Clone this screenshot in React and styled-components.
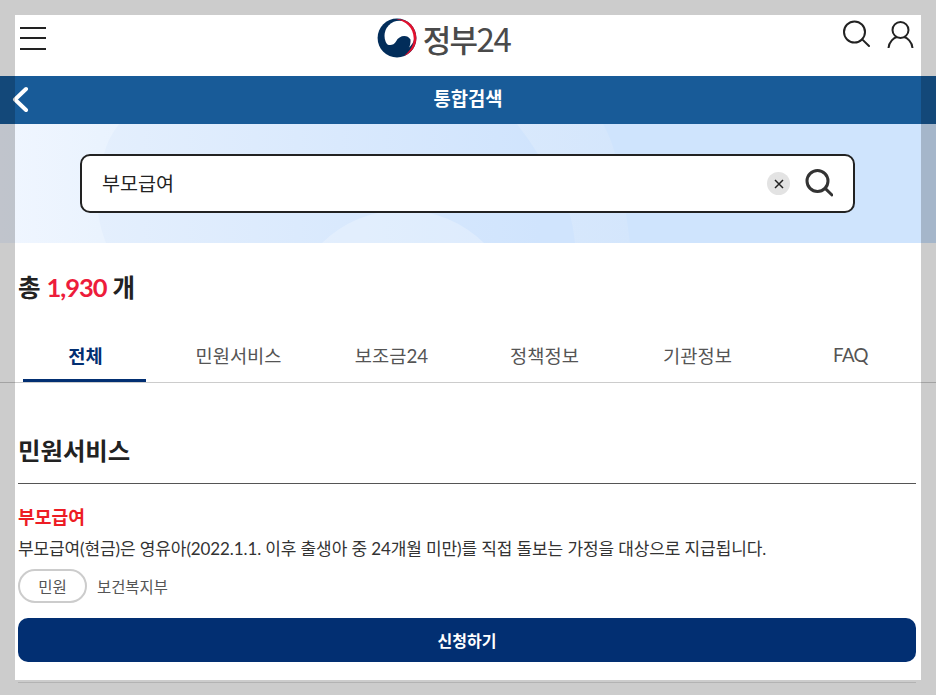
import React from "react";
import styled, { createGlobalStyle } from "styled-components";

const Global = createGlobalStyle`
  html, body { margin: 0; padding: 0; background: #fff; overflow: hidden; }
  * { box-sizing: border-box; }
  body { font-family: Lato, "Noto Sans CJK KR", "Noto Sans", sans-serif; color: #222; }
`;

const Page = styled.div`
  width: 936px;
  height: 695px;
`;
const Frame = styled.div`
  position: fixed;
  inset: 0;
  border: 15px solid rgba(0, 0, 0, 0.2);
  pointer-events: none;
`;
const Header = styled.header`
  height: 76px;
  display: flex;
  align-items: flex-start;
  justify-content: space-between;
  padding: 0 22px 0 20px;
`;
const Burger = styled.div`
  width: 26px;
  margin-top: 26.5px;
  display: flex;
  flex-direction: column;
  gap: 8.5px;
`;
const BurgerLine = styled.span`
  display: block;
  height: 2px;
  background: #222;
`;
const Logo = styled.div`
  display: flex;
  align-items: center;
  gap: 6px;
  margin-top: 18px;
  margin-left: -1px;
  height: 40px;
`;
const LogoText = styled.span`
  font-family: "Noto Sans CJK KR", sans-serif;
  font-size: 31px;
  font-weight: 500;
  letter-spacing: -1.6px;
  color: #4a4a4a;
  line-height: 40px;
`;
const LogoNum = styled.span`
  font-size: 33px;
  font-weight: 400;
  letter-spacing: -1.4px;
`;
const HeadIcons = styled.div`
  display: flex;
  gap: 17px;
  margin-top: 20px;
`;
const TitleBar = styled.div`
  height: 48px;
  background: #185b98;
  display: grid;
  grid-template-columns: 1fr auto 1fr;
  align-items: center;
  padding: 0 11px 4px;
`;
const BarTitle = styled.h1`
  margin: 0;
  font-family: "Noto Sans CJK KR", sans-serif;
  font-size: 18.8px;
  font-weight: 700;
  color: #fff;
  line-height: 44px;
`;
const Hero = styled.section`
  position: relative;
  height: 119px;
  padding-top: 30px;
  padding-left: 80px;
  overflow: hidden;
  background: #cfe4fd;
`;
const HeroArt = styled.svg`
  position: absolute;
  left: 0;
  top: 0;
  display: block;
`;
const SearchBox = styled.div`
  position: relative;
  width: 775px;
  height: 59px;
  background: #fff;
  border: 2px solid #222;
  border-radius: 10px;
  display: flex;
  align-items: center;
  padding: 0 20px 2px 20px;
`;
const Query = styled.span`
  flex: 1;
  font-family: "Noto Sans CJK KR", sans-serif;
  font-size: 19.6px;
  color: #222;
`;
const ClearBtn = styled.span`
  width: 23px;
  height: 23px;
  border-radius: 50%;
  background: #e3e3e3;
  display: flex;
  align-items: center;
  justify-content: center;
  margin: 2px 15px 0 0;
`;
const Total = styled.div`
  height: 87px;
  padding: 26px 0 0 18px;
  font-size: 24.5px;
  font-weight: 700;
  line-height: 36px;
  color: #222;
`;
const Count = styled.em`
  font-style: normal;
  font-size: 25.5px;
  font-weight: 700;
  letter-spacing: -1px;
  color: #ed1c3b;
`;
const Tabs = styled.nav`
  display: grid;
  grid-template-columns: repeat(6, 153px);
  padding-left: 8px;
  height: 53px;
  border-bottom: 1px solid #ccc;
`;
const Tab = styled.a`
  margin: 0 15px;
  height: 52px;
  display: flex;
  align-items: center;
  justify-content: center;
  padding-left: 2px;
  padding-top: ${(p) => (p.$latin ? "1px" : "0")};
  font-size: 18.7px;
  letter-spacing: ${(p) => (p.$latin ? "-0.6px" : "0")};
  font-weight: ${(p) => (p.$active ? 700 : 400)};
  color: ${(p) => (p.$active ? "#022f72" : "#555")};
  border-bottom: 3px solid ${(p) => (p.$active ? "#022f72" : "transparent")};
`;
const Content = styled.main`
  padding: 0 20px 0 18px;
`;
const Section = styled.h2`
  margin: 0;
  padding-top: 50px;
  height: 101px;
  font-size: 24.4px;
  font-weight: 700;
  line-height: 36px;
  color: #222;
  border-bottom: 1px solid #555;
`;
const Item = styled.article`
  padding-top: 20px;
  height: 199px;
  border-bottom: 1px solid #e0e0e0;
`;
const ItemTitle = styled.h3`
  margin: 0;
  font-size: 18.2px;
  font-weight: 700;
  line-height: 26px;
  color: #ed1c24;
`;
const Desc = styled.p`
  margin: 6px 0 0;
  font-size: 17px;
  line-height: 26px;
  letter-spacing: -0.11px;
  white-space: nowrap;
  color: #333;
`;
const Meta = styled.div`
  display: flex;
  align-items: center;
  gap: 10px;
  margin-top: 7px;
`;
const Chip = styled.span`
  width: 69px;
  height: 34px;
  border: 2px solid #ccc;
  border-radius: 17px;
  display: flex;
  align-items: center;
  justify-content: center;
  font-size: 15.5px;
  color: #555;
`;
const Org = styled.span`
  font-size: 15.4px;
  color: #555;
`;
const ApplyBtn = styled.button`
  display: block;
  width: 100%;
  height: 44px;
  margin-top: 15px;
  border: 0;
  border-radius: 10px;
  background: #022f72;
  color: #fff;
  font-family: inherit;
  font-size: 16px;
  font-weight: 700;
`;

const SearchIcon = ({ size = 28, sw = 2, color = "#222" }) => (
  <svg width={size} height={size} viewBox="0 0 28 28" fill="none" stroke={color} strokeWidth={sw} style={{ display: "block" }}>
    <circle cx="12.5" cy="12" r="10.5" />
    <path d="M20.2 19.4 L27 26" strokeLinecap="round" />
  </svg>
);

export default function App() {
  return (
    <Page>
      <Global />
      <Header>
        <Burger>
          <BurgerLine />
          <BurgerLine />
          <BurgerLine />
        </Burger>
        <Logo>
          <svg width="40" height="40" viewBox="0 0 40 40">
            <circle cx="20" cy="20" r="19.4" fill="#022d5a" />
            <circle cx="22.5" cy="17.8" r="15" fill="#fff" />
            <path d="M6.6 21 C7.5 28 16 29 19 23.5 C22 17.5 30 16 33.5 21.5 C34 28 31 33 27 36 L20 39 L8 33 Z" fill="#022d5a" />
            <path d="M19 1 C31 0 39.4 9 39.4 20 C39.4 28 34.5 35 27 38 C33 33 37 27 36.7 20 C36.4 10 29 3 19 1 Z" fill="#e2112e" />
          </svg>
          <LogoText>정부<LogoNum>24</LogoNum></LogoText>
        </Logo>
        <HeadIcons>
          <SearchIcon />
          <svg width="27" height="28" viewBox="0 0 27 28" fill="none" stroke="#222" strokeWidth="2" style={{ display: "block" }}>
            <circle cx="13.5" cy="10" r="8" />
            <path d="M1.5 28 C2 21.5 7 17.8 10 17" />
            <path d="M25.5 28 C25 21.5 20 17.8 17 17" />
          </svg>
        </HeadIcons>
      </Header>
      <TitleBar>
        <svg width="20" height="28" viewBox="0 0 20 28" fill="none" stroke="#fff" strokeWidth="4" strokeLinecap="round" strokeLinejoin="round" style={{ display: "block" }}>
          <path d="M15 5 L4 15.5 L15 26" />
        </svg>
        <BarTitle>통합검색</BarTitle>
      </TitleBar>
      <Hero>
        <HeroArt width="936" height="119" viewBox="0 0 936 119">
          <defs>
            <linearGradient id="heroLeft" x1="0" y1="0" x2="630" y2="0" gradientUnits="userSpaceOnUse">
              <stop offset="0" stopColor="#f0f6ff" />
              <stop offset="0.16" stopColor="#eaf3fe" />
              <stop offset="1" stopColor="#d4e6fc" />
            </linearGradient>
            <linearGradient id="heroBlob" x1="98" y1="0" x2="540" y2="0" gradientUnits="userSpaceOnUse">
              <stop offset="0" stopColor="#e4effd" />
              <stop offset="1" stopColor="#d0e4fd" />
            </linearGradient>
          </defs>
          <path d="M0 0 H603 Q611 14 615 30 Q624 70 630 119 H0 Z" fill="url(#heroLeft)" />
          <path d="M119 0 Q108 14 104 30 Q95 60 98 88 Q100 104 106 119 H575 Q573 100 569 88 Q556 54 538 30 Q528 14 517 0 Z" fill="url(#heroBlob)" />
          <circle cx="403" cy="202" r="116" fill="#fff" fillOpacity="0.25" />
        </HeroArt>
        <SearchBox>
          <Query>부모급여</Query>
          <ClearBtn>
            <svg width="10" height="10" viewBox="0 0 10 10" stroke="#222" strokeWidth="1.5" style={{ display: "block" }}>
              <path d="M1 1 L9 9 M9 1 L1 9" />
            </svg>
          </ClearBtn>
          <SearchIcon sw={3} color="#333" />
        </SearchBox>
      </Hero>
      <Total>
        총 <Count>1,930</Count> 개
      </Total>
      <Tabs>
        <Tab $active>전체</Tab>
        <Tab>민원서비스</Tab>
        <Tab>보조금24</Tab>
        <Tab>정책정보</Tab>
        <Tab>기관정보</Tab>
        <Tab $latin>FAQ</Tab>
      </Tabs>
      <Content>
        <Section>민원서비스</Section>
        <Item>
          <ItemTitle>부모급여</ItemTitle>
          <Desc>부모급여(현금)은 영유아(2022.1.1. 이후 출생아 중 24개월 미만)를 직접 돌보는 가정을 대상으로 지급됩니다.</Desc>
          <Meta>
            <Chip>민원</Chip>
            <Org>보건복지부</Org>
          </Meta>
          <ApplyBtn>신청하기</ApplyBtn>
        </Item>
      </Content>
      <Frame />
    </Page>
  );
}
